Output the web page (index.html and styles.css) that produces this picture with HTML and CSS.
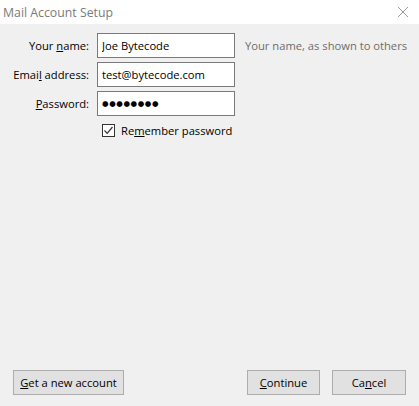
FILE: index.html
```html
<!DOCTYPE html>
<html lang="en">
<head>
    <meta charset="UTF-8">
    <meta name="viewport" content="width=device-width, initial-scale=1.0">
    <link rel="stylesheet" href="styles.css">
</head>
<body>
    <div class="dialog">
        <div class="titlebar">
            <span class="title">Mail Account Setup</span>
            <span class="close">
                <svg width="12" height="12" viewBox="0 0 12 12"><path d="M1 1 L11 11 M11 1 L1 11" stroke="#9a9a9a" stroke-width="1" fill="none"/></svg>
            </span>
        </div>

        <div class="content">
            <!-- форма аккаунта -->
            <div class="form">
                <label class="label">Your <u>n</u>ame:</label>
                <input class="field" type="text" value="Joe Bytecode">
                <span class="hint">Your name, as shown to others</span>

                <label class="label">Emai<u>l</u> address:</label>
                <input class="field" type="text" value="test@bytecode.com">
                <span></span>

                <label class="label"><u>P</u>assword:</label>
                <input class="field password" type="text" value="&#9679;&#9679;&#9679;&#9679;&#9679;&#9679;&#9679;&#9679;">
                <span></span>

                <span></span>
                <div class="remember">
                    <span class="checkbox">
                        <svg width="11" height="11" viewBox="0 0 11 11"><path d="M1.5 5.5 L4.2 8.3 L9.5 2" stroke="#333" stroke-width="1.2" fill="none"/></svg>
                    </span>
                    <span>Re<u>m</u>ember password</span>
                </div>
            </div>

            <div class="buttons">
                <button class="btn btn-new"><u>G</u>et a new account</button>
                <div class="right">
                    <button class="btn btn-continue"><u>C</u>ontinue</button>
                    <button class="btn btn-cancel">Ca<u>n</u>cel</button>
                </div>
            </div>
        </div>
    </div>
</body>
</html>
```

FILE: styles.css
```css
body {
    margin: 0;
    padding: 0;
    font-family: "Open Sans", "Noto Sans", sans-serif;
    font-size: 11.2px;
    color: #000;
}

.dialog {
    width: 419px;
    height: 406px;
    display: flex;
    flex-direction: column;
    background-color: #f0f0f0;
}

.titlebar {
    height: 24px;
    background-color: #fff;
    display: flex;
    align-items: center;
    justify-content: space-between;
    padding: 0 10px 0 3px;
}

.title {
    color: #7a7a7a;
    font-size: 12.3px;
}

.close {
    display: flex;
}

.content {
    flex: 1;
    display: flex;
    flex-direction: column;
    justify-content: space-between;
    padding: 9px 13px 11px 11px;
}

.form {
    display: grid;
    grid-template-columns: 78px 138px auto;
    column-gap: 8px;
    row-gap: 4px;
    align-items: center;
}

.label {
    text-align: right;
    white-space: nowrap;
}

.field {
    height: 25px;
    box-sizing: border-box;
    width: 138px;
    border: 1px solid #7a7a7a;
    background-color: #fff;
    font-family: inherit;
    font-size: 11.2px;
    padding: 0 4px;
    margin: 0;
    outline: none;
}

.password {
    font-family: "DejaVu Sans", sans-serif;
    font-size: 7.5px;
    letter-spacing: 0.6px;
}

.hint {
    color: #6d6d6d;
    white-space: nowrap;
    padding-left: 2px;
}

.remember {
    grid-column: 2 / 4;
    display: flex;
    align-items: center;
    gap: 6px;
    padding-left: 5px;
    margin-top: 3px;
    white-space: nowrap;
}

.checkbox {
    width: 11px;
    height: 11px;
    border: 1px solid #333;
    background-color: #fff;
    display: flex;
}

.buttons {
    display: flex;
    justify-content: space-between;
    padding-left: 2px;
}

.right {
    display: flex;
    gap: 12px;
}

.btn {
    height: 25px;
    box-sizing: border-box;
    background-color: #e1e1e1;
    border: 1px solid #adadad;
    font-family: inherit;
    font-size: 11.2px;
    color: #000;
    padding: 0;
    margin: 0;
}

.btn-new {
    width: 111px;
}

.btn-continue {
    width: 73px;
}

.btn-cancel {
    width: 74px;
}
```
